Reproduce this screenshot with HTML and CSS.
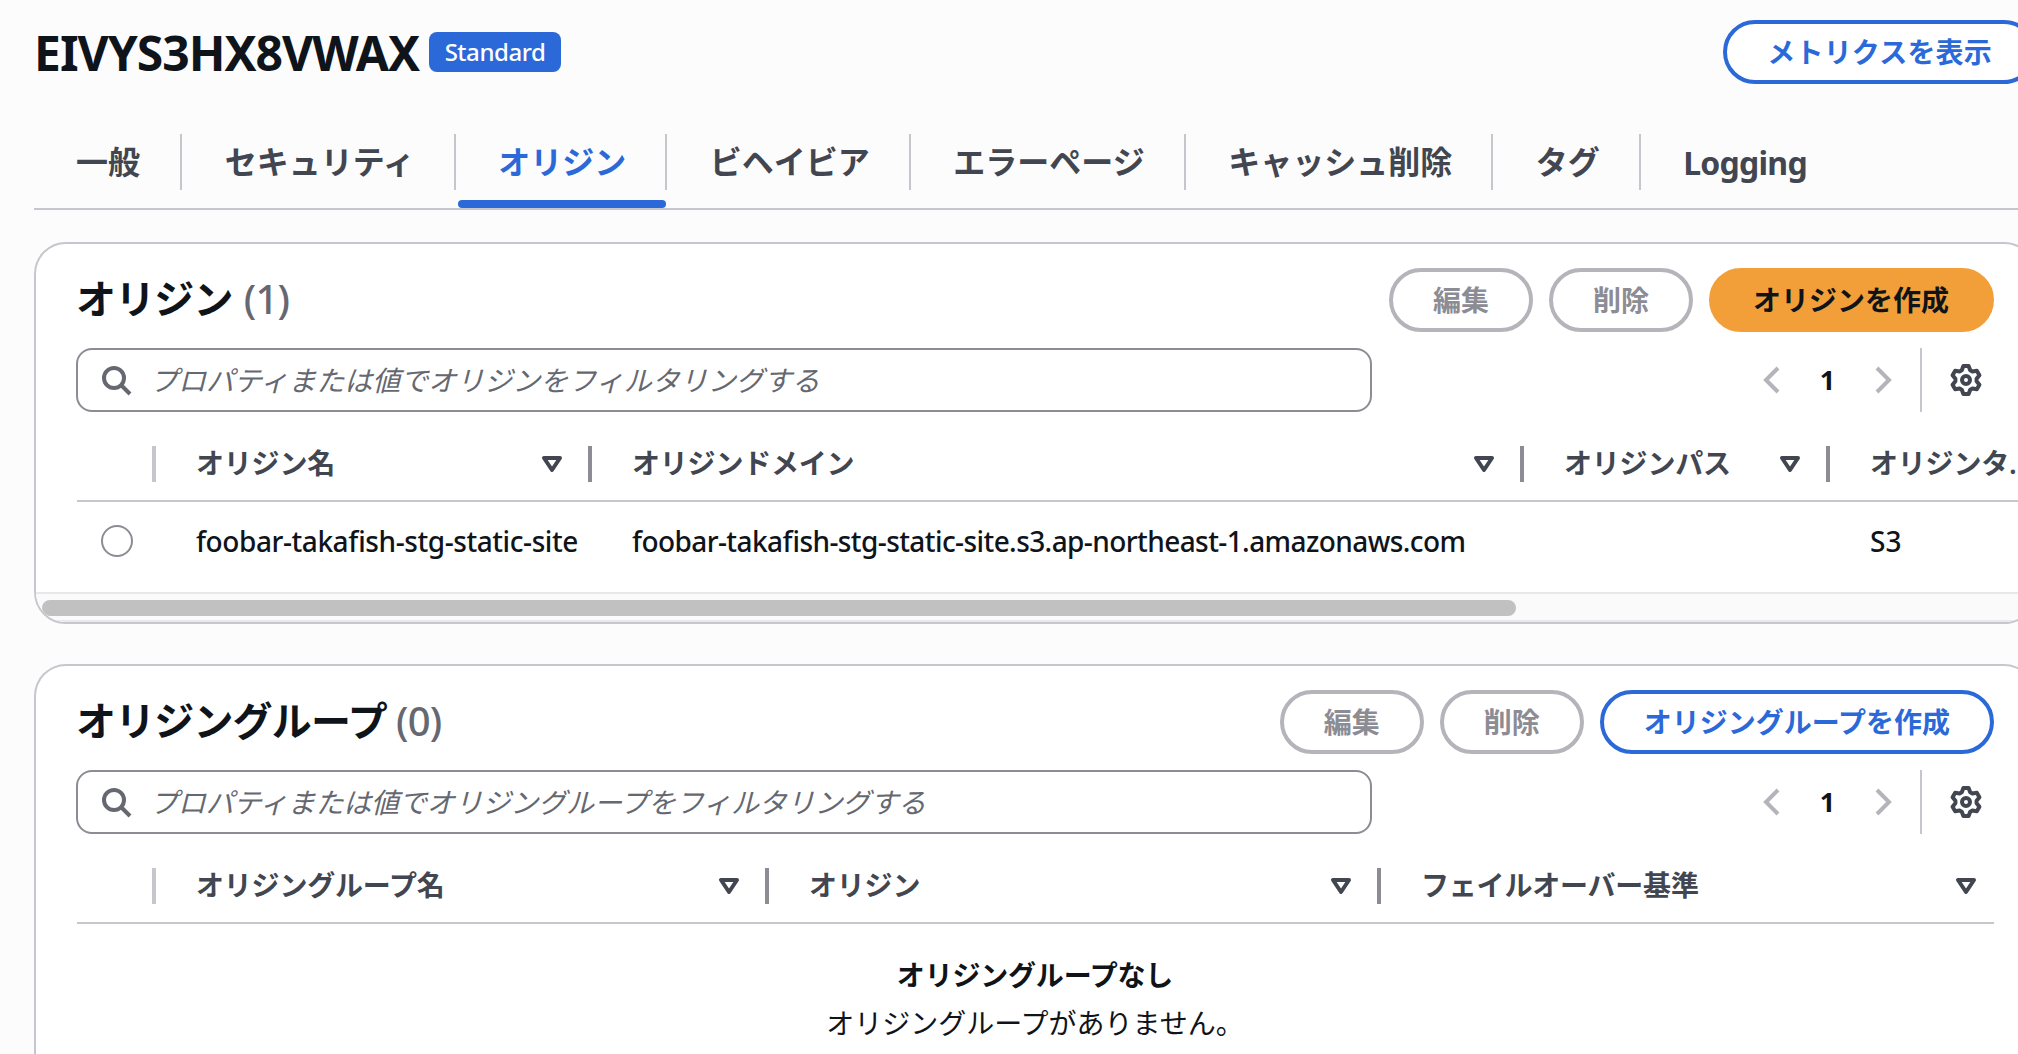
FILE: index.html
```html
<!DOCTYPE html>
<html lang="ja">
<head>
<meta charset="utf-8">
<title>CloudFront</title>
<link rel="stylesheet" href="styles.css">
</head>
<body>
<svg class="defs" width="0" height="0">
  <symbol id="search" viewBox="0 0 16 16"><circle cx="7" cy="7" r="5"/><path d="M10.5 10.5 15 15"/></symbol>
  <symbol id="sort" viewBox="0 0 16 16"><path stroke-linejoin="round" d="M4 5h8l-4 6z"/></symbol>
  <symbol id="prev" viewBox="0 0 16 16"><path d="M11 2 5 8l6 6"/></symbol>
  <symbol id="next" viewBox="0 0 16 16"><path d="m5 2 6 6-6 6"/></symbol>
  <symbol id="gear" viewBox="-8 -8 16 16"><circle r="2"/><path stroke-linejoin="round" d="M-1.3-7H1.3L2.1-4.9 3.2-4.3 5.41-4.63 6.71-2.37 5.3-.63V.63L6.71 2.37 5.41 4.63 3.2 4.3 2.1 4.9 1.3 7H-1.3L-2.1 4.9-3.2 4.3-5.41 4.63-6.71 2.37-5.3.63V-.63L-6.71-2.37-5.41-4.63-3.2-4.3-2.1-4.9Z"/></symbol>
</svg>
<main class="page">
  <header class="page-head">
    <h1>EIVYS3HX8VWAX</h1>
    <span class="badge">Standard</span>
    <button class="btn btn-normal btn-metrics">メトリクスを表示</button>
  </header>

  <nav class="tabs">
    <a class="tab">一般</a>
    <a class="tab">セキュリティ</a>
    <a class="tab active">オリジン</a>
    <a class="tab">ビヘイビア</a>
    <a class="tab">エラーページ</a>
    <a class="tab">キャッシュ削除</a>
    <a class="tab">タグ</a>
    <a class="tab latin">Logging</a>
  </nav>

  <section class="card">
    <div class="card-head">
      <h2>オリジン <span class="count">(1)</span></h2>
      <div class="actions">
        <button class="btn btn-disabled">編集</button>
        <button class="btn btn-disabled">削除</button>
        <button class="btn btn-primary">オリジンを作成</button>
      </div>
    </div>
    <div class="tools">
      <div class="filter"><svg class="icon"><use href="#search"/></svg><span>プロパティまたは値でオリジンをフィルタリングする</span></div>
      <div class="pager"><svg class="icon"><use href="#prev"/></svg><b>1</b><svg class="icon"><use href="#next"/></svg></div>
      <div class="prefs"><svg class="icon"><use href="#gear"/></svg></div>
    </div>
    <div class="table origins">
      <div class="row head">
        <div class="cell select"></div>
        <div class="cell"><span>オリジン名</span><svg class="icon"><use href="#sort"/></svg></div>
        <div class="cell"><span>オリジンドメイン</span><svg class="icon"><use href="#sort"/></svg></div>
        <div class="cell"><span>オリジンパス</span><svg class="icon"><use href="#sort"/></svg></div>
        <div class="cell"><span>オリジンタ…</span></div>
      </div>
      <div class="row body">
        <div class="cell select"><i class="radio"></i></div>
        <div class="cell name">foobar-takafish-stg-static-site</div>
        <div class="cell domain">foobar-takafish-stg-static-site.s3.ap-northeast-1.amazonaws.com</div>
        <div class="cell"></div>
        <div class="cell type">S3</div>
      </div>
    </div>
    <div class="scrollbar"><div class="thumb"></div></div>
  </section>

  <section class="card card-groups">
    <div class="card-head">
      <h2>オリジングループ <span class="count">(0)</span></h2>
      <div class="actions">
        <button class="btn btn-disabled">編集</button>
        <button class="btn btn-disabled">削除</button>
        <button class="btn btn-normal">オリジングループを作成</button>
      </div>
    </div>
    <div class="tools">
      <div class="filter"><svg class="icon"><use href="#search"/></svg><span>プロパティまたは値でオリジングループをフィルタリングする</span></div>
      <div class="pager"><svg class="icon"><use href="#prev"/></svg><b>1</b><svg class="icon"><use href="#next"/></svg></div>
      <div class="prefs"><svg class="icon"><use href="#gear"/></svg></div>
    </div>
    <div class="table groups">
      <div class="row head">
        <div class="cell select"></div>
        <div class="cell"><span>オリジングループ名</span><svg class="icon"><use href="#sort"/></svg></div>
        <div class="cell"><span>オリジン</span><svg class="icon"><use href="#sort"/></svg></div>
        <div class="cell"><span>フェイルオーバー基準</span><svg class="icon"><use href="#sort"/></svg></div>
      </div>
    </div>
    <div class="empty"><b>オリジングループなし</b><p>オリジングループがありません。</p></div>
  </section>
</main>
</body>
</html>
```
FILE: styles.css
```css
* { box-sizing: border-box; }
body {
  margin: 0;
  height: 1054px;
  overflow: hidden;
  background: #fcfcfd;
  color: #0f141a;
  font: 28px/40px "Noto Sans", "Noto Sans CJK JP", sans-serif;
  white-space: nowrap;
}
h1, h2, p { margin: 0; }
.defs { display: block; }
.page { width: 2036px; padding-left: 34px; }

.icon {
  flex: none;
  width: 32px;
  height: 32px;
  fill: none;
  stroke: currentColor;
  stroke-width: 2px;
}

.page-head { display: flex; height: 134px; padding-top: 20px; }
h1 { width: 395px; font-size: 48px; line-height: 66px; font-weight: 700; letter-spacing: -1px; }
.badge {
  width: 132px;
  height: 40px;
  margin-top: 12px;
  border-radius: 8px;
  background: #2b69d9;
  color: #fff;
  font-size: 24px;
  font-weight: 500;
  letter-spacing: -0.45px;
  text-align: center;
}

.btn {
  height: 64px;
  padding: 0 40px 2px;
  border: 4px solid;
  border-radius: 32px;
  background: #fff;
  font: 600 28px/54px "Noto Sans CJK JP", sans-serif;
  white-space: nowrap;
}
.btn-normal { border-color: #2b69d9; color: #2b69d9; }
.btn-disabled { border-color: #b4b4bb; color: #8c8c94; }
.btn-primary { padding: 0 41px 2px 40px; border-color: #f29f39; background: #f29f39; color: #0f141a; }
.btn-metrics { margin-left: auto; letter-spacing: 0.2px; }

.tabs { display: flex; height: 76px; border-bottom: 2px solid #c6c6cd; }
.tab {
  display: flex;
  flex-direction: column;
  justify-content: space-between;
  height: 74px;
  color: #424650;
  font: 600 32px/53px "Noto Sans CJK JP", sans-serif;
  padding: 0 41.1px 0 42.4px;
  background: linear-gradient(#c6c6cd, #c6c6cd) right top / 2px 56px no-repeat;
}
.tab:first-child { width: 148.4px; padding-left: 42px; }
.tab:last-child { background: none; }
.tab.latin { font: 700 32px/58px "Noto Sans", sans-serif; letter-spacing: -0.75px; }
.tab.active { color: #2b69d9; }
.tab.active::after {
  content: "";
  height: 8px;
  margin: 0 -40px 0 -40px;
  border-radius: 4px;
  background: #2b69d9;
}

.card {
  margin-top: 32px;
  height: 382px;
  border: 2px solid #c6c6cd;
  border-radius: 32px;
  background: #fff;
  overflow: hidden;
}
.card-groups { margin-top: 40px; height: 390px; border-bottom: 0; border-radius: 32px 32px 0 0; }
.card-head, .tools { display: flex; padding: 0 40px; }
.card-head { height: 104px; padding-top: 24px; justify-content: space-between; }
h2 { font: 600 40px/59px "Noto Sans CJK JP", sans-serif; letter-spacing: -0.85px; }
.count { margin-left: 3px; color: #656871; font-family: "Noto Sans", sans-serif; font-weight: 500; letter-spacing: -0.8px; }
.card-groups .count { margin-left: 1px; }
.actions { display: flex; gap: 16px; }

.tools { height: 64px; align-items: center; }
.filter {
  display: flex;
  align-items: center;
  gap: 18px;
  width: 1296px;
  height: 64px;
  padding-left: 22px;
  border: 2px solid #8c8c94;
  border-radius: 16px;
  color: #656871;
}
.filter span { padding-bottom: 2px; font-family: "Noto Sans CJK JP", sans-serif; font-style: italic; }
.card-groups .filter span { letter-spacing: -0.15px; }
.pager { display: flex; width: 143px; margin-left: auto; align-items: center; color: #b4b4bb; }
.pager b { width: 79px; color: #0f141a; font-size: 27px; text-align: center; }
.prefs {
  display: flex;
  height: 64px;
  margin-left: 21px;
  padding: 0 12px 0 28px;
  align-items: center;
  border-left: 2px solid #c6c6cd;
  color: #424650;
}

.table { margin-left: 41px; }
.row { display: grid; align-items: center; }
.origins .row { grid-template-columns: 79px 436px 932px 306px 1fr; }
.groups .row { grid-template-columns: 79px 613px 612px 613px; }
.groups { width: 1917px; }
.head {
  height: 90px;
  padding-top: 16px;
  border-bottom: 2px solid #c6c6cd;
  color: #424650;
  font-weight: 600;
}
.cell { padding-left: 40px; }
.select { padding-left: 24px; }
.head .cell {
  display: flex;
  height: 36px;
  align-items: center;
  justify-content: space-between;
  padding-right: 20px;
  border-right: 4px solid #8c8c94;
}
.head .cell span { padding-bottom: 2px; letter-spacing: -0.2px; }
.head .select { border-color: #c6c6cd; }
.head .cell:last-child { padding-right: 12px; border: 0; }
.body { height: 90px; padding-bottom: 12px; }
.radio { display: block; width: 32px; height: 32px; border: 2px solid #8c8c94; border-radius: 50%; }
.name, .domain, .type { font-weight: 500; font-feature-settings: "liga" 1; }
.name { letter-spacing: -0.42px; }
.domain { letter-spacing: -0.58px; }

.scrollbar {
  height: 30px;
  padding: 6px 0 0 6px;
  border: solid #e8e8e8;
  border-width: 2px 0;
  background: #fafafa;
}
.thumb { width: 1474px; height: 16px; border-radius: 8px; background: #c1c1c1; }

.empty {
  width: 1918px;
  margin-left: 40px;
  padding-top: 26px;
  font: 28px/48px "Noto Sans CJK JP", sans-serif;
  text-align: center;
}
.empty b { font-weight: 700; letter-spacing: -0.2px; }
```
